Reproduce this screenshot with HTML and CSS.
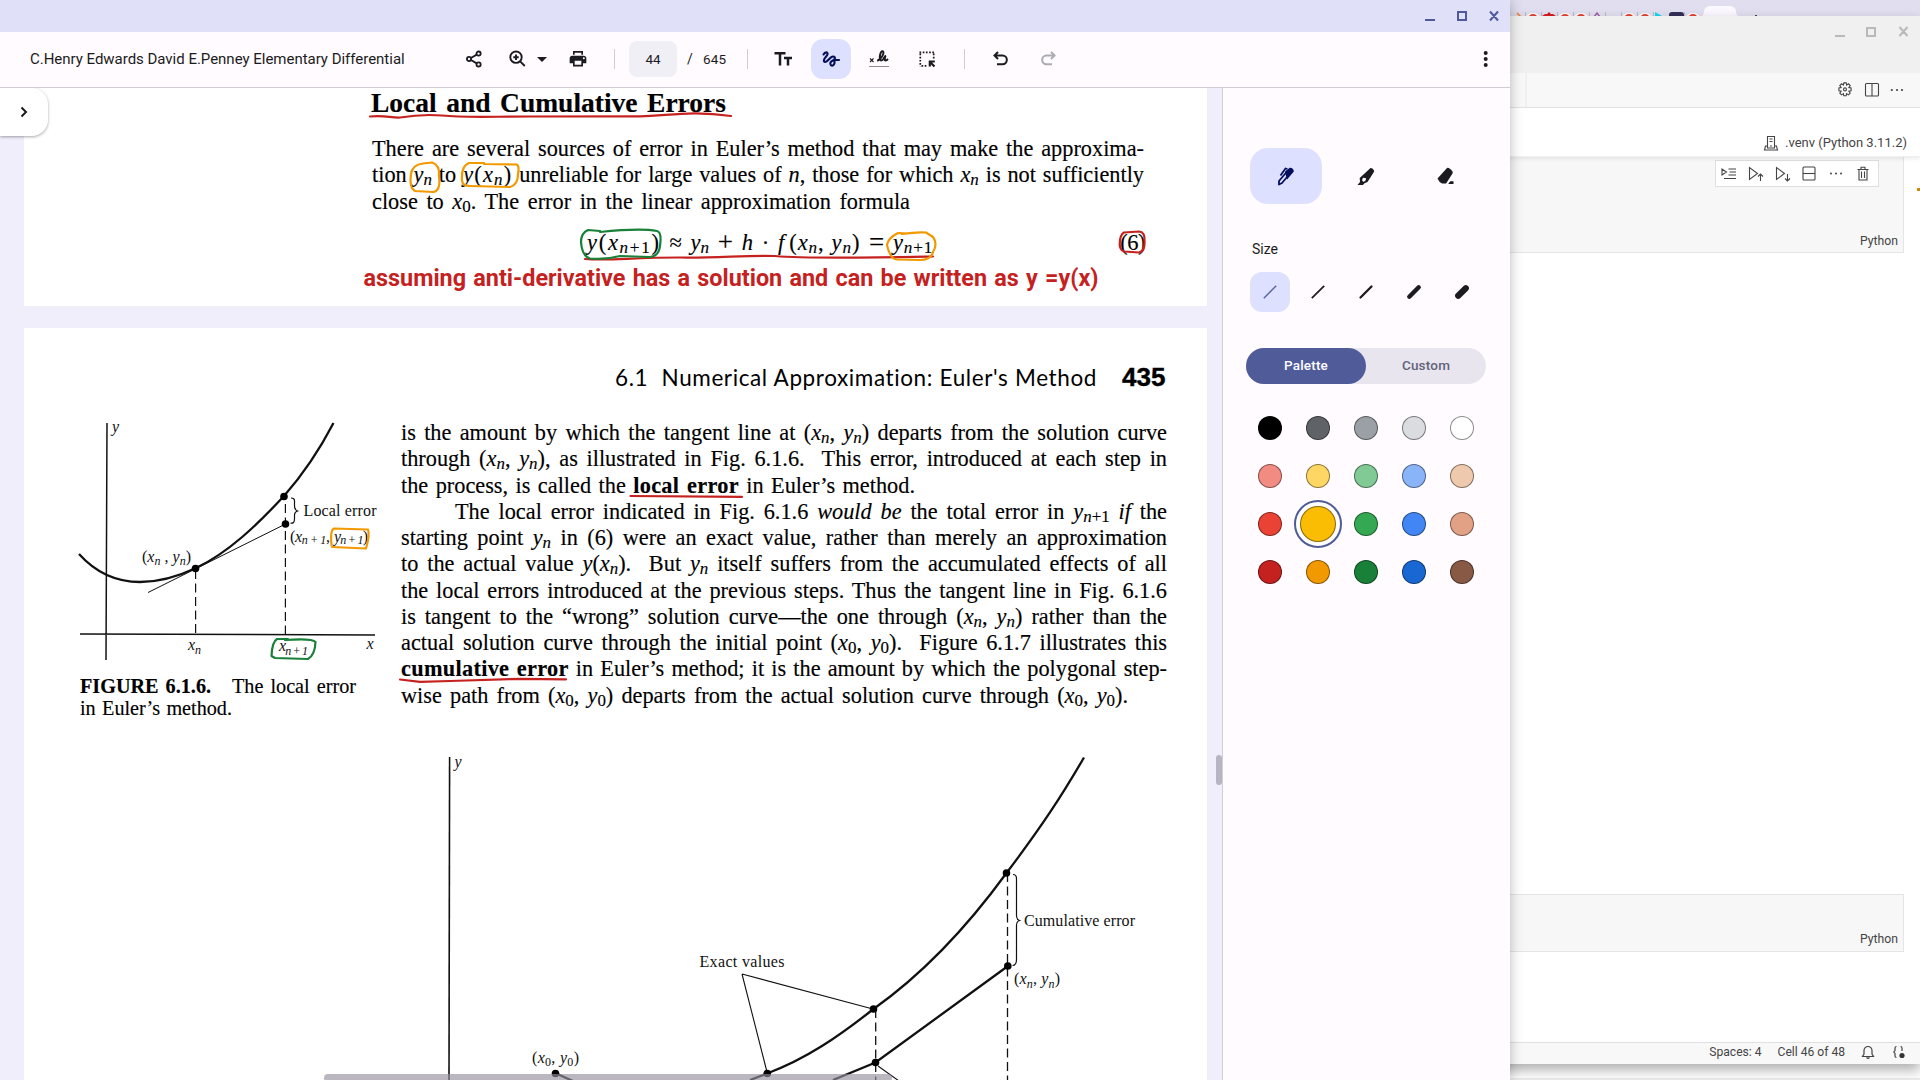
FILE: index.html
```html
<!DOCTYPE html>
<html lang="en">
<head>
<meta charset="utf-8">
<title>C.Henry Edwards David E.Penney Elementary Differential</title>
<link rel="stylesheet" href="styles.css">
</head>
<body>
<div class="desktop">

  <div class="browser-strip">
    <svg width="410" height="16" viewBox="1510 0 410 16">
      <g fill="#fff"><circle cx="1533" cy="21" r="8"/><circle cx="1549" cy="21" r="8"/><circle cx="1565" cy="21" r="8"/><circle cx="1581" cy="21" r="8"/><circle cx="1629" cy="21" r="8"/><circle cx="1645" cy="21" r="8"/><circle cx="1693" cy="21" r="8"/></g>
      <g fill="#e8402f"><circle cx="1533" cy="19" r="5"/><circle cx="1565" cy="19" r="5"/><circle cx="1581" cy="19" r="5"/><circle cx="1629" cy="19" r="5"/><circle cx="1645" cy="19" r="5"/><circle cx="1693" cy="19" r="5"/></g>
      <path d="M1542 16l3-2h2l2-2 2 2h2l3 2z" fill="#d41c24"/>
      <path d="M1517 13l4 4" stroke="#f08030" stroke-width="1.5"/>
      <path d="M1594 17l3-4 3 4" fill="none" stroke="#a060a0" stroke-width="1.5"/>
      <path d="M1655 16v-4l7 4z" fill="#10d8f0"/>
      <rect x="1669" y="12" width="15" height="8" rx="3" fill="#332f57"/>
      <path d="M1525.500 12v4M1541.500 12v4M1557.500 12v4M1573.500 12v4M1589.500 12v4M1605.500 12v4M1621.500 12v4M1637.500 12v4M1653.500 12v4M1684.500 12v4" stroke="#bbb9c6"/>
      <path d="M1702 16q2-1 2-5q1-5 7-5h18q6 0 7 5q0 4 2 5z" fill="#fbf8ff"/>
      <rect x="1755" y="15" width="2" height="1" fill="#444"/>
    </svg>
  </div>

  <section class="editor">
    <div class="editor-title">
      <svg width="84" height="16" viewBox="0 0 84 16"><g fill="none" stroke="#b9b9b9" stroke-width="2"><path d="M1 12h10M33 4h8v8h-8zM65.500 3l8 9M73.500 3l-8 9"/></g></svg>
    </div>
    <div class="editor-tabs">
      <div class="tab-end"></div>
      <div class="tab-actions">
        <svg width="16" height="16" viewBox="0 0 16 16" fill="none" stroke="#444" stroke-width="1.1"><path d="M6.800 .9h2.400l.4 2.200 1.900-1.300 1.700 1.700-1.300 2 2.200.4v2.900l-2.200.4 1.300 2-1.700 1.700-1.900-1.300-.4 2.200H6.800l-.4-2.200-1.900 1.300-1.700-1.700 1.300-2L1.900 8.800V5.900l2.200-.4-1.300-2 1.700-1.700 1.900 1.300z"/><circle cx="8" cy="7.400" r="1.500"/></svg>
        <svg width="16" height="16" viewBox="0 0 16 16" fill="none" stroke="#444" stroke-width="1.1"><rect x="1.500" y="1.500" width="13" height="12.500" rx="1"/><path d="M8 1.500v12.500"/></svg>
        <svg width="16" height="16" viewBox="0 0 16 16" fill="#444"><circle cx="2.800" cy="8" r="1.100"/><circle cx="8" cy="8" r="1.100"/><circle cx="13" cy="8" r="1.100"/></svg>
      </div>
    </div>
    <div class="kernel-bar">
      <svg width="16" height="16" viewBox="0 0 16 16" fill="none" stroke="#444" stroke-width="1.100"><path d="M4.500 13V1.500h7V13M4 11H2.500L1.500 15h13l-1-4H12M6.500 4h3M6.500 6.500h3M7 11h2M4 13h8"/></svg>
      <span class="kernel-name">.venv (Python 3.11.2)</span>
    </div>
    <div class="cell cell-first">
      <div class="cell-tools">
        <svg width="16" height="16" viewBox="0 0 16 16"><path d="M1 3v6l4.500-3zM7.500 3H15M8.500 6H15M7.500 9H15M3 12.500h12"/></svg>
        <svg width="16" height="16" viewBox="0 0 16 16"><path d="M1.500 1.500v12l8-6zM12.500 15V8M10 10.500L12.500 8l2.500 2.500"/></svg>
        <svg width="16" height="16" viewBox="0 0 16 16"><path d="M1.500 1.500v12l8-6zM12.500 8v7M10 12.500l2.500 2.500 2.500-2.500"/></svg>
        <svg width="16" height="16" viewBox="0 0 16 16"><rect x="2" y="1" width="12" height="13" rx="1"/><path d="M2 7.500h12"/></svg>
        <svg width="16" height="16" viewBox="0 0 16 16" class="solid"><circle cx="3" cy="7.500" r="1"/><circle cx="8" cy="7.500" r="1"/><circle cx="13" cy="7.500" r="1"/></svg>
        <svg width="16" height="16" viewBox="0 0 16 16"><path d="M2.500 3.500h11M6 3.500V1.300h4v2.200M4 3.500V14h8V3.500M6.500 5.500v6.500M9.500 5.500v6.500"/></svg>
      </div>
      <span class="lang">Python</span>
    </div>
    <div class="ruler-mark"></div>
    <div class="cell cell-second"><span class="lang">Python</span></div>
    <div class="status">
      <span class="status-spaces">Spaces: 4</span>
      <span class="status-cell">Cell 46 of 48</span>
      <svg class="bell" width="14" height="14" viewBox="0 0 14 14" fill="none" stroke="#444" stroke-width="1.200"><path d="M1.500 11.500h11L11 9V5.500a4 4 0 0 0-8 0V9zM5.500 12.500q1.500 1.500 3 0"/></svg>
      <svg width="14" height="14" viewBox="0 0 14 14" fill="none" stroke="#444" stroke-width="1.200"><path d="M4.500 1.500Q3 1.500 3 3v2.500L1.800 7 3 8.500V11q0 1.500 1.500 1.500M8.500 1.500Q10 1.500 10 3v3"/><circle cx="10" cy="10.500" r="2.600" fill="#333" stroke="none"/></svg>
    </div>
  </section>

  <main class="gallery">
    <div class="titlebar">
      <svg width="72" height="12" viewBox="0 0 72 12"><g fill="none" stroke="#4e5a9a" stroke-width="2"><path d="M0 10h10M33 2h8v8h-8zM65 1.500l8 9M73 1.500l-8 9"/></g></svg>
    </div>
    <header class="toolbar">
      <h1 class="doc-title">C.Henry Edwards David E.Penney Elementary Differential</h1>
      <span class="tool share"><svg width="20" height="20" viewBox="0 0 24 24" fill="none" stroke="#1b1b21" stroke-width="2.200"><circle cx="17.500" cy="5.500" r="2.500"/><circle cx="6" cy="12" r="2.500"/><circle cx="17.500" cy="18.500" r="2.500"/><path d="M8.300 10.800l7-4M8.300 13.200l7 4"/></svg></span>
      <span class="tool narrow"><svg width="20" height="20" viewBox="0 0 20 20" fill="none" stroke="#1b1b21" stroke-width="1.900"><circle cx="9" cy="8.200" r="5.700"/><path d="M13.100 12.300l4.700 4.700M6.300 8.200h5.400M9 5.500v5.400"/></svg></span>
      <span class="caret"></span>
      <span class="tool"><svg width="20" height="20" viewBox="0 0 24 24" fill="#1b1b21"><path fill-rule="evenodd" d="M19 8H5c-1.660 0-3 1.340-3 3v6h4v4h12v-4h4v-6c0-1.660-1.340-3-3-3zM16 19H8v-5h8zM19 12.300a1.200 1.200 0 1 1 0-2.400 1.200 1.200 0 0 1 0 2.400zM18 2.500H6V7h2V4.500h8V7h2z"/></svg></span>
      <span class="sep"></span>
      <span class="page-no">44</span>
      <span class="slash">/</span>
      <span class="page-total">645</span>
      <span class="sep sep-b"></span>
      <span class="tool"><svg width="20" height="20" viewBox="0 0 20 20" fill="none" stroke="#1b1b21" stroke-width="2.500"><path d="M1.500 4.300h11M7 4.300v12.200M11 9h8M15 9v7.500"/></svg></span>
      <span class="tool"><span class="active"><svg width="20" height="20" viewBox="0 0 20 20" fill="none" stroke="#05105c" stroke-width="2.100" stroke-linecap="round" stroke-linejoin="round"><path d="M2.500 5.500C4 2.500 7 2.800 6.500 5.200S2 10 3 12.200s4-.8 6-2.900 4.500-2.500 5-.3-3.600 2.400-4.500 4.500 1.100 4.200 3 2.500.8-5 .5-5.500M13.500 11h4.500"/></svg></span></span>
      <span class="tool"><svg width="20" height="20" viewBox="0 0 20 20" fill="none" stroke="#1b1b21" stroke-width="2"><path d="M8.200 11.700c4-1 8-8.700 5.500-9.400s-4 8-1.800 9 3.800-4.300 4.300-4.300-1.400 4.500.3 4.500 2.300-1.300 2.500-1.500"/><path d="M1 9.500l3.500 3.500M4.500 9.500L1 13" stroke-width="1.100"/><path d="M.5 17.500h19" stroke-width="1.200" stroke-dasharray="1 1"/></svg></span>
      <span class="tool"><svg width="20" height="20" viewBox="0 0 20 20" fill="none" stroke="#1b1b21" stroke-width="1.700"><path d="M2.500 3.300h15M3.300 4.500v13M16.700 4.500V11M4.500 16.800H10" stroke-dasharray="1.700 1.500"/><path d="M17.500 17.500l-4-4M12.800 17.500v-5h5" stroke-width="2.200"/></svg></span>
      <span class="sep sep-c"></span>
      <span class="tool"><svg width="20" height="20" viewBox="0 0 20 20" fill="none" stroke="#1b1b21" stroke-width="2"><path d="M7 3L3.500 6.500 7 10M3.500 6.500h8a4.300 4.300 0 0 1 0 8.700H6"/></svg></span>
      <span class="tool redo"><svg width="20" height="20" viewBox="0 0 20 20" fill="none" stroke="#adabb2" stroke-width="2"><path d="M13 3l3.500 3.500L13 10M16.500 6.500h-8a4.300 4.300 0 0 0 0 8.700H14"/></svg></span>
      <span class="tool more"><svg width="20" height="20" viewBox="0 0 20 20" fill="#1b1b21"><circle cx="9.700" cy="4" r="2"/><circle cx="9.700" cy="10" r="2"/><circle cx="9.700" cy="16" r="2"/></svg></span>
    </header>

    <div class="body">
      <div class="viewer">
        <article class="page page-one">
          <h2 class="heading">Local and Cumulative Errors</h2>
          <div class="para para-one">
            <div class="ln">There are several sources of error in Euler’s method that may make the approxima-</div>
            <div class="ln">tion <i>y<sub>n</sub></i> to <span class="wide"><i>y</i>(<i>x<sub>n</sub></i>)</span> unreliable for large values of <i>n</i>, those for which <i>x<sub>n</sub></i> is not sufficiently</div>
            <div class="ln ln-short">close to <i>x</i><sub>0</sub>. The error in the linear approximation formula</div>
          </div>
          <div class="equation">
            <div class="formula"><span class="lhs"><i>y</i>(<i>x<sub>n</sub></i><sub>+1</sub>)</span> <span>≈</span> <i>y<sub>n</sub></i> <span class="op">+</span> <i>h</i> · <span class="call"><i>f</i><span class="args">(</span><i>x<sub>n</sub></i>,<i class="second">y<sub>n</sub></i>)</span> <span class="op">=</span> <span class="rhs"><i>y<sub>n</sub></i><sub>+1</sub></span></div>
            <div class="eq-no">(6)</div>
          </div>
          <div class="note">assuming anti-derivative has a solution and can be written as y =y(x)</div>
        </article>

        <article class="page page-two">
          <div class="running-head"><span class="section">6.1&nbsp; Numerical Approximation: Euler's Method</span><span class="folio">435</span></div>
          <div class="columns">
            <figure class="figure-one">
              <svg width="320" height="255" viewBox="60 415 320 255">
                <g fill="none" stroke="#111">
                  <path d="M107 423L106 660M80 634L375 635" stroke-width="1.500"/>
                  <path d="M79 554C97 574 117 582 140 582C158 582 177 577 196 568C228 553 257 525 284 496C306 471 321 447 333.500 423" stroke-width="2.300"/>
                  <path d="M148 592.500L285.500 524"/>
                  <path d="M195.600 570v64M285.400 504v130" stroke-dasharray="9 4.500" stroke-width="1.200"/>
                  <path d="M291 498q4 0 3.500 4v4q0 4 3 5q-3 1-3 4v4q0 5-4 4" stroke-width="1.200"/>
                </g>
                <g fill="#000"><circle cx="195.500" cy="568.500" r="3.800"/><circle cx="284" cy="496.500" r="3.800"/><circle cx="285.500" cy="524" r="3.800"/></g>
                <g class="label">
                  <text x="112" y="432" font-style="italic">y</text>
                  <text x="303.500" y="516" textLength="73">Local error</text>
                  <text x="290" y="541.500" textLength="40">(<tspan font-style="italic">x</tspan><tspan class="subt" dy="2.500">n + 1</tspan><tspan dy="-2.500">,</tspan></text>
                  <text x="334" y="541.500" textLength="34"><tspan font-style="italic">y</tspan><tspan class="subt" dy="2.500">n + 1</tspan><tspan dy="-2.500">)</tspan></text>
                  <text x="142" y="562" textLength="49">(<tspan font-style="italic">x</tspan><tspan class="subt" dy="3">n</tspan><tspan dy="-3"> , </tspan><tspan font-style="italic">y</tspan><tspan class="subt" dy="3">n</tspan><tspan dy="-3">)</tspan></text>
                  <text x="188" y="650" font-style="italic">x<tspan class="subt" dy="4">n</tspan></text>
                  <text x="279" y="650.500" textLength="29"><tspan font-style="italic">x</tspan><tspan class="subt" dy="4">n + 1</tspan></text>
                  <text x="366.500" y="648.500" font-style="italic">x</text>
                </g>
              </svg>
              <figcaption><div class="cap-line cap-a"><b>FIGURE 6.1.6.</b>&nbsp;&nbsp; The local error</div><div class="cap-line cap-b">in Euler’s method.</div></figcaption>
            </figure>
            <div class="para para-two">
              <div class="ln">is the amount by which the tangent line at (<i>x<sub>n</sub></i>, <i>y<sub>n</sub></i>) departs from the solution curve</div>
              <div class="ln">through (<i>x<sub>n</sub></i>, <i>y<sub>n</sub></i>), as illustrated in Fig. 6.1.6.&nbsp; This error, introduced at each step in</div>
              <div class="ln ln-a">the process, is called the <b>local error</b> in Euler’s method.</div>
              <div class="ln ln-indent">The local error indicated in Fig. 6.1.6 <i>would be</i> the total error in <i>y<sub>n</sub></i><sub>+1</sub> <i>if</i> the</div>
              <div class="ln">starting point <i>y<sub>n</sub></i> in (6) were an exact value, rather than merely an approximation</div>
              <div class="ln">to the actual value <i>y</i>(<i>x<sub>n</sub></i>).&nbsp; But <i>y<sub>n</sub></i> itself suffers from the accumulated effects of all</div>
              <div class="ln">the local errors introduced at the previous steps. Thus the tangent line in Fig. 6.1.6</div>
              <div class="ln">is tangent to the “wrong” solution curve—the one through (<i>x<sub>n</sub></i>, <i>y<sub>n</sub></i>) rather than the</div>
              <div class="ln">actual solution curve through the initial point (<i>x</i><sub>0</sub>, <i>y</i><sub>0</sub>).&nbsp; Figure 6.1.7 illustrates this</div>
              <div class="ln"><b>cumulative error</b> in Euler’s method; it is the amount by which the polygonal step-</div>
              <div class="ln ln-b">wise path from (<i>x</i><sub>0</sub>, <i>y</i><sub>0</sub>) departs from the actual solution curve through (<i>x</i><sub>0</sub>, <i>y</i><sub>0</sub>).</div>
            </div>
          </div>
          <svg class="figure-two" width="760" height="330" viewBox="440 750 760 330">
            <g fill="none" stroke="#111">
              <path d="M449.600 757L449 1080" stroke-width="1.600"/>
              <path d="M1084 757.500C1061 797 1042 826 1006.500 873C965 930 920 976 873.500 1009C838 1037 806 1059 767 1073.500L750 1080" stroke-width="2.300"/>
              <path d="M1008 966L875.500 1062.500L833 1080M555 1073L573 1081" stroke-width="2.300"/>
              <path d="M1007.500 873v210M875.700 1009v75" stroke-width="1.300" stroke-dasharray="9 4.500"/>
              <path d="M742 974L871 1008.500M742 974L767 1072M878 1066L899 1081" stroke-width="1.100"/>
              <path d="M1013 874.500q3.500 0 3.500 4v37q0 4 3 5q-3 1-3 5v34q0 6-4 6" stroke-width="1.200"/>
            </g>
            <g fill="#000"><circle cx="1006.500" cy="873" r="3.800"/><circle cx="1007.800" cy="966" r="3.800"/><circle cx="873.500" cy="1009" r="3.800"/><circle cx="875.500" cy="1062.500" r="3.800"/><circle cx="767.300" cy="1073.500" r="3.800"/><circle cx="555.500" cy="1073.500" r="3.800"/></g>
            <g class="label">
              <text x="454.500" y="767" font-style="italic">y</text>
              <text x="1024" y="926" textLength="111">Cumulative error</text>
              <text x="699.500" y="967" textLength="85">Exact values</text>
              <text x="1014" y="984" textLength="46">(<tspan font-style="italic">x</tspan><tspan class="subt" dy="3.500">n</tspan><tspan dy="-3.500">, </tspan><tspan font-style="italic">y</tspan><tspan class="subt" dy="3.500">n</tspan><tspan dy="-3.500">)</tspan></text>
              <text x="532" y="1062.500" textLength="47">(<tspan font-style="italic">x</tspan><tspan font-size="12" dy="3.500">0</tspan><tspan dy="-3.500">, </tspan><tspan font-style="italic">y</tspan><tspan font-size="12" dy="3.500">0</tspan><tspan dy="-3.500">)</tspan></text>
            </g>
          </svg>
        </article>

        <svg class="ink" width="1222" height="992" viewBox="0 88 1222 992">
          <g fill="none" stroke-width="2.200" stroke-linecap="round" stroke-linejoin="round">
            <g stroke="#c5221f">
              <path d="M370 116.500C385 115 391 118 400 117.500C415 115 430 114.500 442 115.500C465 118 490 116.500 530 116.500L640 116.300C668 116 690 110 731 116"/>
              <path d="M585 259C610 261 630 257.500 680 257.500C720 258 745 255 775 256C810 259 880 257.500 933 256.500"/>
              <path d="M1124 232.500L1139 231.500Q1145 232 1144.500 240Q1145 252 1139 252.500L1124 251.500Q1118.500 250 1120 240Q1121 234 1124 232.500"/>
              <path d="M630.500 496L742 496.800M400 679.500L420 681.800L450 681L520 678.800L566 679.300"/>
            </g>
            <g stroke="#f29900">
              <path d="M423 163.500L432 162.500Q440 165 439 176Q441 191 433 192L415 191Q409 188 411 174Q412 165 423 163.500"/>
              <path d="M484 163L469 163Q461 166 462 180Q462 186 470 186L510 187Q518 185 518 174Q520 164 515 164.500L484 164"/>
              <path d="M909 233.500L898 233Q888 238 887 245Q890 259 897 259.500L920 260Q931 260 933 252Q938 244 933 237L926 232.500Q915 232 902 234"/>
              <path d="M332 547L366 548.500Q370 535 368 529.500L334 528.500Q330 530 331.500 545"/>
            </g>
            <g stroke="#188038">
              <path d="M600 231L588 230Q581 233 581 242Q582 256 590 258.500Q605 260 620 256L650 257Q659 256 660 246Q662 232 657 231Q640 228 600 232"/>
              <path d="M288 639L277 639Q272 642 271.500 656L275 658L308 659Q315 655 315.500 642Q312 638 285 640"/>
            </g>
          </g>
        </svg>
        <div class="expand"><svg width="12" height="14" viewBox="0 0 12 14" fill="none" stroke="#1b1b21" stroke-width="2"><path d="M3.500 2.500L8 7l-4.500 4.500"/></svg></div>
        <div class="scroll-y"></div>
        <div class="scroll-x"></div>
      </div>

      <aside class="panel">
        <div class="brushes">
          <span class="brush on"><svg width="24" height="24" viewBox="0 0 24 24" fill="none" stroke="#05105c"><path d="M5 20.500V17L13.500 7l2.500 2.500-8 9.500-3 1.500z" stroke-width="1.800" stroke-linejoin="round"/><path d="M12 8l4-3.300q2.500.3 2.800 2.500L13.500 13.500z" fill="#05105c" stroke="#05105c" stroke-width="2"/><path d="M6.500 11.500l5-7 2 .5" stroke-width="1.800"/></svg></span>
          <span class="brush"><svg width="24" height="24" viewBox="0 0 24 24" fill="#1b1b21"><path fill-rule="evenodd" d="M16.500 4q3 .3 3.700 3.500L13.500 18l-3 1.300L9 21H3.500l2.500-3-.3-4zM9 13.800l-1 2.400 1.700 1.700 2-1.700.4-2z"/></svg></span>
          <span class="brush"><svg width="24" height="24" viewBox="0 0 24 24" fill="#1b1b21"><path d="M13 4q2-1 5.500 3.500.5 1 0 2l-6.400 10H8q-3-1.500-4.500-5zM19.500 20h-5.300l2-2.700h3.300z"/></svg></span>
        </div>
        <div class="size-label">Size</div>
        <div class="sizes">
          <span class="size on"><svg width="20" height="20" viewBox="0 0 20 20"><path d="M3.800 16.200L16.200 3.800" stroke="#5560a0" stroke-width="1.300"/></svg></span>
          <span class="size"><svg width="20" height="20" viewBox="0 0 20 20"><path d="M3.800 16.200L16.200 3.800" stroke="#1b1b21" stroke-width="1.700"/></svg></span>
          <span class="size"><svg width="20" height="20" viewBox="0 0 20 20"><path d="M4.500 15.500L15.500 4.500" stroke="#1b1b21" stroke-width="2.300" stroke-linecap="round"/></svg></span>
          <span class="size"><svg width="20" height="20" viewBox="0 0 20 20"><path d="M5.300 14.700L14.700 5.300" stroke="#1b1b21" stroke-width="4.400" stroke-linecap="round"/></svg></span>
          <span class="size"><svg width="20" height="20" viewBox="0 0 20 20"><path d="M6.200 13.800L13.800 6.200" stroke="#1b1b21" stroke-width="6.200" stroke-linecap="round"/></svg></span>
        </div>
        <div class="toggle"><span class="toggle-on">Palette</span><span>Custom</span></div>
        <div class="palette">
          <i class="black"></i><i class="grey-dark"></i><i class="grey"></i><i class="grey-light"></i><i class="white"></i>
          <i class="red-light"></i><i class="yellow-light"></i><i class="green-light"></i><i class="blue-light"></i><i class="tan-light"></i>
          <i class="red"></i><b class="picked"><i class="yellow"></i></b><i class="green"></i><i class="blue"></i><i class="tan"></i>
          <i class="red-dark"></i><i class="orange"></i><i class="green-dark"></i><i class="blue-dark"></i><i class="brown"></i>
        </div>
      </aside>
    </div>
  </main>
</div>
</body>
</html>
```
FILE: styles.css
```css
* { box-sizing: border-box; }
body { margin: 0; background: #fafafa; font-family: Roboto, "Liberation Sans", sans-serif; }
svg { display: block; flex: none; }
.desktop { position: relative; width: 1920px; height: 1080px; overflow: hidden; background: linear-gradient(#fff 0 1078px, #ececec 1078px); }

.browser-strip { height: 16px; padding-left: 1510px; background: #e1dfef; }

/* Code editor window */
.editor { position: absolute; isolation: isolate; left: 1100px; top: 16px; width: 820px; height: 1048px; display: flex; flex-direction: column; background: #fff; color: #444; box-shadow: 0 6px 12px rgba(0,0,0,.32); }
.editor-title { height: 57px; padding: 8px 0 0; display: flex; justify-content: flex-end; background: #f0f0f0; }
.editor-title svg { margin-right: 2px; overflow: visible; }
.editor-tabs { height: 35px; display: flex; justify-content: space-between; align-items: stretch; background: #f8f8f8; border-bottom: 1px solid #e4e4e4; }
.tab-end { width: 427px; border-right: 2px solid #f0f0f0; }
.tab-actions { display: flex; align-items: center; gap: 10.5px; padding-right: 15px; }
.tab-actions svg:last-child { margin-left: -1px; }
.kernel-bar { height: 49px; padding: 21px 13px 0 0; display: flex; justify-content: flex-end; align-items: center; gap: 6px; background: #fff; border-bottom: 1px solid #f0f0f0; box-shadow: 0 2px 4px rgba(0,0,0,.08); z-index: 1; }
.kernel-name { width: 122px; font-size: 13px; white-space: nowrap; }
.cell { width: 804px; display: flex; flex-direction: column; align-items: flex-end; justify-content: flex-end; background: #f7f7f7; border: 1px solid #e5e5e5; }
.cell-first { height: 96px; border-top: 0; justify-content: space-between; padding-top: 3px; }
.cell-tools { width: 164px; height: 27px; margin-right: 24px; padding: 0 7px 0 5px; display: flex; align-items: center; justify-content: space-between; background: #fff; border: 1px solid #dfdfdf; }
.cell-tools svg { fill: none; stroke: #444; stroke-width: 1.1; }
.cell-tools .solid { fill: #444; stroke: none; }
.lang { font-size: 12.2px; line-height: 14px; padding: 0 5px 2px 0; }
.cell-first .lang { padding-bottom: 4px; }
.ruler-mark { align-self: flex-end; width: 3px; height: 3px; margin-top: -65px; background: #c98a10; }
.cell-second { height: 58px; margin-top: 703px; padding-bottom: 3px; }
.status { height: 22px; margin-top: auto; padding: 0 14px 3px 0; display: flex; align-items: center; justify-content: flex-end; font-size: 12.1px; background: #f8f8f8; border-top: 1px solid #e0e0e0; }
.status-cell { margin: 0 16px; }
.bell { margin-right: 17px; }

/* Document viewer window */
.gallery { position: absolute; left: 0; top: 0; width: 1510px; height: 1080px; background: #fffbff; box-shadow: 0 0 12px rgba(0,0,0,.28); color: #1b1b21; }
.titlebar { height: 32px; padding: 10px 13px 0 0; display: flex; justify-content: flex-end; background: #e0e0f8; }
.titlebar svg { overflow: visible; }
.toolbar { height: 56px; display: flex; align-items: center; border-bottom: 1px solid #cfccd6; padding-bottom: 1px; }
.doc-title { width: 420px; margin: 0 0 0 30px; font-size: 15px; font-weight: 400; white-space: nowrap; letter-spacing: -.02px; }
.tool { width: 48px; display: flex; align-items: center; justify-content: center; }
.narrow { width: 24px; margin-left: 7px; }
.caret { width: 10px; margin: 0 7px 0 8px; border: 5px solid transparent; border-top-color: #1b1b21; border-bottom: 0; }
.sep { width: 1px; height: 20px; margin: 0 14px 0 12px; background: #cfccd6; }
.page-no { width: 48px; height: 36px; border-radius: 8px; background: #f1eff6; text-align: center; font-size: 13.5px; line-height: 36px; }
.slash { margin-left: 10px; width: 16px; font-size: 14px; }
.page-total { width: 42px; font-size: 13.5px; letter-spacing: .2px; }
.sep-b { margin: 0 11px 0 2px; }
.active { width: 40px; height: 40px; border-radius: 12px; background: #dee0ff; display: flex; align-items: center; justify-content: center; }
.sep-c { margin: 0 12px 0 13px; }
.redo { margin-left: -1px; }
.more { margin-left: auto; }

.body { display: flex; height: 992px; }
.viewer { position: relative; width: 1222px; height: 992px; padding-left: 24px; overflow: hidden; background: #f0eefa; }
.page { width: 1183px; background: #fff; color: #000; font-family: "Liberation Serif", serif; -webkit-text-stroke: .15px #000; }
.page-one { height: 218px; padding-left: 348px; }
.heading { width: 355px; height: 30px; margin: 0 0 17.500px -1px; font-size: 27.500px; line-height: 29px; text-align-last: justify; white-space: nowrap; }
.para { font-size: 22.300px; }
.ln { height: 26.280px; line-height: 26.280px; text-align-last: justify; }
sub { font-size: .76em; line-height: 0; vertical-align: -.2em; }
.para-one { width: 772px; }
.para-one .ln { height: 26.500px; line-height: 26.500px; }
.wide { letter-spacing: 1.2px; }
.para-one .ln-short { width: 538px; }
.equation { display: flex; justify-content: space-between; width: 773px; margin-top: 14.700px; padding-left: 215px; font-size: 22.500px; line-height: 26.500px; }
.formula { width: 346px; text-align-last: justify; white-space: nowrap; }
.lhs { letter-spacing: 1.7px; }
.op { font-size: 27px; line-height: 0; vertical-align: -1px; }
.args { margin-left: 4px; }
.second { margin-left: 7px; }
.call { letter-spacing: .9px; }
.rhs { letter-spacing: .8px; }
.eq-no { letter-spacing: -.5px; }
.note { width: 735px; margin: 6.800px 0 0 -8.500px; font: 700 23.400px/30px Roboto, sans-serif; color: #c5221f; text-align-last: justify; white-space: nowrap; -webkit-text-stroke: 0; }

.page-two { height: 752px; margin-top: 22px; }
.running-head { height: 91px; padding: 33.500px 42px 0 0; display: flex; justify-content: flex-end; gap: 25px; line-height: 32px; }
.section { width: 482px; font-family: Lato, sans-serif; font-size: 22.500px; letter-spacing: .6px; text-align-last: justify; white-space: nowrap; -webkit-text-stroke: 0; }
.folio { width: 43px; font: 700 26px/30px "Liberation Sans", sans-serif; -webkit-text-stroke: .4px #000; }
.columns { display: flex; height: 310.500px; }
.figure-one { width: 377px; margin: 0; padding: 0 0 0 36px; }
.figure-one svg { margin-top: -4px; }
figcaption { margin: 6px 0 0 20px; font-size: 20.200px; line-height: 21.800px; }
.cap-line { text-align-last: justify; white-space: nowrap; }
.cap-a { width: 276px; }
.cap-b { width: 152px; }
.para-two { width: 766px; padding-top: 1px; }
.para-two b { letter-spacing: .3px; }
.ln-a { width: 514px; }
.ln-indent { padding-left: 54px; }
.ln-b { width: 727px; }
.figure-two { margin: 20.500px 0 0 416px; }
.label { font: 16px "Liberation Serif", serif; fill: #111; }
.subt { font-size: 12px; font-style: italic; }

.ink { position: absolute; left: 0; top: 0; }
.expand { position: absolute; left: 0; top: 0; width: 48px; height: 48px; padding-left: 18px; display: flex; align-items: center; background: #fff; border-radius: 0 16px 16px 0; box-shadow: 0 1px 3px rgba(0,0,0,.35); }
.scroll-y { position: absolute; left: 1216px; top: 667px; width: 6px; height: 30px; border-radius: 3px; background: #b8b5c3; }
.scroll-x { position: absolute; left: 324px; top: 986px; width: 568px; height: 8px; border-radius: 4px; background: rgba(150,145,160,.65); }

.panel { width: 288px; border-left: 1px solid #d2cfda; padding: 60px 23px 0; }
.brushes { display: flex; gap: 8px; padding-left: 4px; }
.brush { width: 72px; height: 56px; border-radius: 18px; display: flex; align-items: center; justify-content: center; }
.brush.on { background: #dee0ff; }
.size-label { margin: 37px 0 14px 6px; font: 14px/17px Roboto, sans-serif; }
.sizes { display: flex; gap: 8px; padding-left: 4px; }
.size { width: 40px; height: 40px; border-radius: 12px; display: flex; align-items: center; justify-content: center; }
.size.on { background: #dee0ff; }
.toggle { display: flex; width: 240px; height: 36px; margin-top: 36px; border-radius: 18px; background: #e8e5ef; color: #62617a; font: 500 13.5px/35px Roboto, sans-serif; letter-spacing: .2px; text-align: center; }
.toggle span { width: 120px; }
.toggle .toggle-on { border-radius: 18px; background: #505b9a; color: #fff; }
.palette { display: grid; grid-template-columns: repeat(5, 48px); grid-auto-rows: 48px; place-items: center; margin-top: 20px; }
.palette i { width: 24px; height: 24px; border-radius: 50%; border: 1px solid rgba(0,0,0,.45); background-clip: border-box; }
.picked { width: 48px; height: 48px; border: 2px solid #505b9a; border-radius: 50%; display: flex; align-items: center; justify-content: center; background: #fff; }
.picked .yellow { width: 36px; height: 36px; background: #fbbc04; }
.black { background: #000; } .grey-dark { background: #5f6368; } .grey { background: #9aa0a6; } .grey-light { background: #dadce0; } .white { background: #fff; }
.red-light { background: #f28b82; } .yellow-light { background: #fdd663; } .green-light { background: #81c995; } .blue-light { background: #8ab4f8; } .tan-light { background: #eec9ae; }
.red { background: #ea4335; } .green { background: #34a853; } .blue { background: #4285f4; } .tan { background: #e2a185; }
.red-dark { background: #c5221f; } .orange { background: #f29900; } .green-dark { background: #188038; } .blue-dark { background: #1967d2; } .brown { background: #885945; }
```
